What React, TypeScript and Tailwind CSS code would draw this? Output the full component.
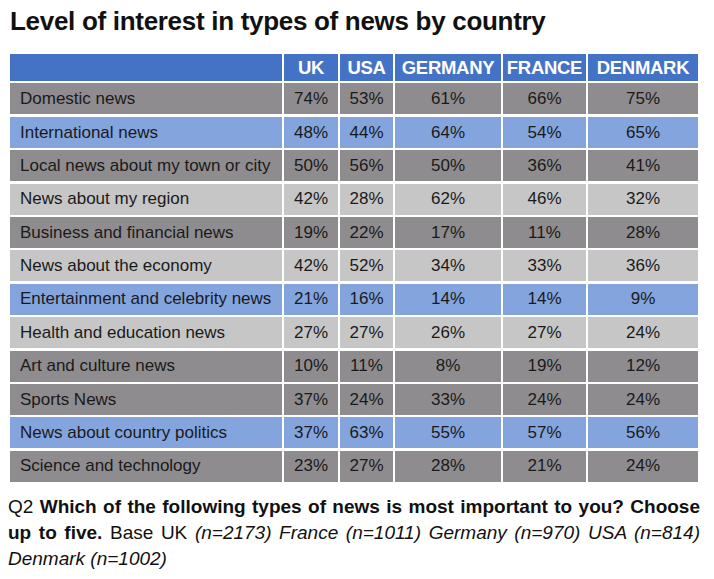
const countries = ['UK', 'USA', 'GERMANY', 'FRANCE', 'DENMARK'];

type Tone = 'dark' | 'blue' | 'light';

const rows: { label: string; tone: Tone; values: string[] }[] = [
  { label: 'Domestic news', tone: 'dark', values: ['74%', '53%', '61%', '66%', '75%'] },
  { label: 'International news', tone: 'blue', values: ['48%', '44%', '64%', '54%', '65%'] },
  { label: 'Local news about my town or city', tone: 'dark', values: ['50%', '56%', '50%', '36%', '41%'] },
  { label: 'News about my region', tone: 'light', values: ['42%', '28%', '62%', '46%', '32%'] },
  { label: 'Business and financial news', tone: 'dark', values: ['19%', '22%', '17%', '11%', '28%'] },
  { label: 'News about the economy', tone: 'light', values: ['42%', '52%', '34%', '33%', '36%'] },
  { label: 'Entertainment and celebrity news', tone: 'blue', values: ['21%', '16%', '14%', '14%', '9%'] },
  { label: 'Health and education news', tone: 'light', values: ['27%', '27%', '26%', '27%', '24%'] },
  { label: 'Art and culture news', tone: 'dark', values: ['10%', '11%', '8%', '19%', '12%'] },
  { label: 'Sports News', tone: 'dark', values: ['37%', '24%', '33%', '24%', '24%'] },
  { label: 'News about country politics', tone: 'blue', values: ['37%', '63%', '55%', '57%', '56%'] },
  { label: 'Science and technology', tone: 'dark', values: ['23%', '27%', '28%', '21%', '24%'] },
];

const toneBg: Record<Tone, string> = {
  dark: 'bg-[#8f8c8f]',
  blue: 'bg-[#84a4dd]',
  light: 'bg-[#c6c6c6]',
};

export default function App() {
  return (
    <div className="w-[714px] h-[579px] bg-white font-['Liberation_Sans',Arial,sans-serif] text-[#1a1a1a] overflow-hidden">
      <h1 className="pl-[10px] pt-[6px] h-[54px] text-[26px] leading-[30px] font-bold text-[#111] tracking-[-0.3px]">
        Level of interest in types of news by country
      </h1>

      {/* Table */}
      <div className="ml-[10px] grid grid-cols-[272px_54px_53px_106px_83px_110px] gap-x-[2px] gap-y-[2.4px] auto-rows-[31px] grid-rows-[27px]">
        <div className="bg-[#4472c4]" />
        {countries.map((c) => (
          <div
            key={c}
            className="bg-[#4472c4] flex items-center justify-center text-white font-bold text-[18.5px] tracking-[-0.3px]"
          >
            {c}
          </div>
        ))}

        {rows.map((r) => (
          <div key={r.label} className="contents">
            <div className={`${toneBg[r.tone]} flex items-center pl-[10px] text-[17px]`}>{r.label}</div>
            {r.values.map((v, i) => (
              <div
                key={i}
                className={`${toneBg[r.tone]} flex items-center justify-center text-[17px]`}
              >
                {v}
              </div>
            ))}
          </div>
        ))}
      </div>

      {/* Footnote */}
      <div className="pl-[8px] pr-[14px] pt-[12px] text-[19px] leading-[26px] text-[#111]">
        <div className="text-justify [text-align-last:justify] whitespace-nowrap">
          Q2 <b>Which of the following types of news is most important to you? Choose</b>
        </div>
        <div className="text-justify [text-align-last:justify] whitespace-nowrap">
          <b>up to five.</b> Base UK <i>(n=2173)</i> <i>France (n=1011)</i> <i>Germany (n=970)</i>{' '}
          <i>USA (n=814)</i>
        </div>
        <div>
          <i>Denmark (n=1002)</i>
        </div>
      </div>
    </div>
  );
}
